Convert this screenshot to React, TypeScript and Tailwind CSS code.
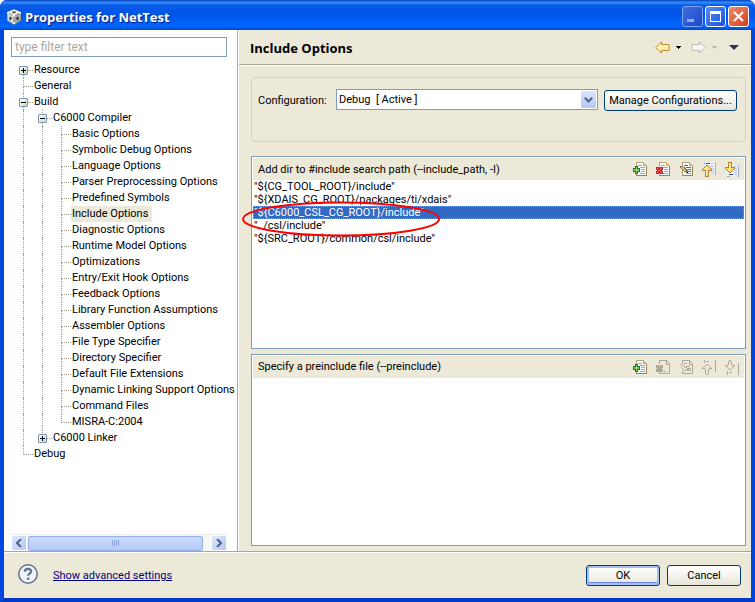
import type { ReactNode } from "react";
import clsx from "clsx";

type TreeNode = {
  label: string;
  open?: boolean;
  selected?: boolean;
  children?: TreeNode[];
};

const tree: TreeNode[] = [
  { label: "Resource", open: false },
  { label: "General" },
  {
    label: "Build",
    open: true,
    children: [
      {
        label: "C6000 Compiler",
        open: true,
        children: [
          { label: "Basic Options" },
          { label: "Symbolic Debug Options" },
          { label: "Language Options" },
          { label: "Parser Preprocessing Options" },
          { label: "Predefined Symbols" },
          { label: "Include Options", selected: true },
          { label: "Diagnostic Options" },
          { label: "Runtime Model Options" },
          { label: "Optimizations" },
          { label: "Entry/Exit Hook Options" },
          { label: "Feedback Options" },
          { label: "Library Function Assumptions" },
          { label: "Assembler Options" },
          { label: "File Type Specifier" },
          { label: "Directory Specifier" },
          { label: "Default File Extensions" },
          { label: "Dynamic Linking Support Options" },
          { label: "Command Files" },
          { label: "MISRA-C:2004" },
        ],
      },
      { label: "C6000 Linker", open: false },
    ],
  },
  { label: "Debug" },
];

const includeDirs = [
  '"${CG_TOOL_ROOT}/include"',
  '"${XDAIS_CG_ROOT}/packages/ti/xdais"',
  '"${C6000_CSL_CG_ROOT}/include"',
  '"../csl/include"',
  '"${SRC_ROOT}/common/csl/include"',
];

const Expander = ({ open, label }: { open: boolean; label: string }) => (
  <button
    aria-label={(open ? "Collapse " : "Expand ") + label}
    className="absolute left-[5px] top-1 size-[9px] rounded-[1px] border border-[#7898b5] bg-linear-to-br from-white to-[#d4cfc0]"
  >
    <svg width="7" height="7" viewBox="0 0 7 7" shapeRendering="crispEdges" className="block">
      <path d={open ? "M1 3h5v1H1z" : "M1 3h5v1H1zM3 1h1v5H3z"} fill="#000" />
    </svg>
  </button>
);

const TreeRows = ({ nodes, trail = [] }: { nodes: TreeNode[]; trail?: boolean[] }) => (
  <>
    {nodes.map((node, i) => {
      const last = i === nodes.length - 1;
      const first = i === 0 && trail.length === 0;
      return (
        <li key={node.label}>
          <div className="flex h-4 items-center whitespace-nowrap">
            {trail.map((goesOn, level) => (
              <span key={level} className="flex h-4 w-[19px] shrink-0 pl-[9px]">
                {goesOn && <span className="border-l border-dotted border-[#a09d8c]" />}
              </span>
            ))}
            <span className="relative flex h-4 w-[19px] shrink-0 flex-col pl-[9px]">
              <span
                className={clsx(
                  "h-[9px] border-b border-dotted border-[#a09d8c]",
                  !first && "border-l"
                )}
              />
              {!last && <span className="h-[7px] border-l border-dotted border-[#a09d8c]" />}
              {node.open !== undefined && <Expander open={node.open} label={node.label} />}
            </span>
            <span className={clsx("h-4 px-px leading-4", node.selected && "bg-[#ece9d8] pr-1")}>
              {node.label}
            </span>
          </div>
          {node.children && node.open && (
            <ul>
              <TreeRows nodes={node.children} trail={[...trail, !last]} />
            </ul>
          )}
        </li>
      );
    })}
  </>
);

const Icon = ({ children }: { children: ReactNode }) => (
  <svg width="16" height="16" viewBox="0 0 16 16" shapeRendering="crispEdges" className="block">
    {children}
  </svg>
);

const Page = () => (
  <>
    <path d="M4 1h8l3 3v11H4z" fill="#f4f8ff" />
    <path d="M4 1h8v1H4zM4 1h1v14H4z" fill="#b5a67e" />
    <path d="M4 14h11v1H4zM14 4h1v11h-1z" fill="#9a8450" />
    <path d="M11 1h1v1h1v1h1v1h1v1h-4z" fill="#d5b15a" />
    <path d="M6 4h4v1H6zM8 6h5v1H8zM9 8h4v1H9zM9 10h4v1H9zM8 12h5v1H8z" fill="#8fabd6" />
  </>
);

const GrayPage = () => (
  <path
    d="M4 1h8v1H4zM4 1h1v4H4zM12 2h1v1h-1zM13 3h1v1h-1zM14 4h1v11h-1zM4 14h11v1H4zM4 12h1v3H4zM11 2h1v3h3v1h-4z"
    fill="#aca899"
  />
);

const AddIcon = () => (
  <Icon>
    <Page />
    <path d="M3 5h3v2h2v4H6v2H3v-2H1V7h2z" fill="#1c7431" />
    <path d="M4 6h1v2h2v2H5v2H4v-2H2V8h2z" fill="#8fce5b" />
  </Icon>
);

const DeleteIcon = ({ disabled }: { disabled?: boolean }) => (
  <Icon>
    {disabled ? <GrayPage /> : <Page />}
    <path
      d="M1 6h3v1h1V6h3v3H7v1h1v3H5v-1H4v1H1v-3h1V9H1z"
      fill={disabled ? "#aca899" : "#cf2634"}
    />
    {disabled ? (
      <path d="M9 12h2v1H9z" fill="#aca899" />
    ) : (
      <path d="M2 7h1v1h1v1h1V8h1V7h1v1H6v1H5v1h1v1h1v1H6v-1H5v-1H4v1H3v1H2v-1h1v-1h1V9H3V8H2z" fill="#ee6068" />
    )}
  </Icon>
);

const EditIcon = ({ disabled }: { disabled?: boolean }) => (
  <Icon>
    {disabled ? (
      <>
        <GrayPage />
        <path d="M6 4h3v1H6zM2 5h1v1H2zM4 6h2v1H4zM6 7h1v1H6zM8 7h4v1H8zM7 8h2v1H7zM3 8h1v1H3zM4 9h1v1H4zM5 10h1v1H5zM9 9h4v1H9zM6 11h2v1H6zM9 11h4v1H9zM8 10h3v1H8z" fill="#aca899" />
      </>
    ) : (
      <>
        <Page />
        <path d="M6 4h4v1H6zM8 6h5v1H8zM10 8h3v1h-3zM10 10h3v1h-3z" fill="#4a6aa5" />
        <path d="M2 5h3v1h2v1h1v1h1v1h1v3H8v-1H6v-1H5V9H4V8H3V7H2z" fill="#8f7040" />
        <path d="M3 6h2v1h1v1h1v1h1v1H6V9H5V8H4V7H3z" fill="#e8c98e" />
        <path d="M9 11h1v1H9z" fill="#222" />
      </>
    )}
  </Icon>
);

const UpIcon = ({ disabled }: { disabled?: boolean }) => (
  <Icon>
    {disabled ? (
      <>
        <path d="M14 1h1v12h-1zM3 1h1v3H3zM5 2h3v1H5z" fill="#aca899" />
        <path d="M5 5h2v1H5zM4 6h1v1H4zM7 6h1v1H7zM3 7h1v1H3zM8 7h1v1H8zM2 8h1v1H2zM9 8h1v1H9zM1 9h3v1H1zM8 9h3v1H8zM4 10h1v5H4zM7 10h1v5H7zM5 15h2v1H5z" fill="#aca899" />
      </>
    ) : (
      <>
        <path d="M3 1h11v12H3z" fill="#edf2fb" />
        <path d="M14 1h1v13h-1z" fill="#9db0cf" />
        <path d="M3 1h1v3H3z" fill="#a9bad6" />
        <path d="M5 2h4v1H5z" fill="#2f4d86" />
        <path d="M10 2h3v1h-3zM9 5h4v1H9zM10 7h3v1h-3zM10 9h3v1h-3zM9 11h4v1H9z" fill="#b9c9e4" />
        <path d="M5 4h2v1h1v1h1v1h1v1h1v2H8v6H4v-6H1V8h1V7h1V6h1V5h1z" fill="#b7812a" />
        <path d="M5 5h2v1h1v1h1v1h1v1H7v6H5V9H2V8h1V7h1V6h1z" fill="#ffdc70" />
        <path d="M5 6h1v8H5z" fill="#fff3bd" />
      </>
    )}
  </Icon>
);

const DownIcon = ({ disabled }: { disabled?: boolean }) => (
  <Icon>
    {disabled ? (
      <>
        <path d="M14 4h1v12h-1zM3 12h1v4H3zM5 13h3v1H5z" fill="#aca899" />
        <path d="M5 1h2v1H5zM4 2h1v4H4zM7 2h1v4H7zM1 6h3v1H1zM8 6h3v1H8zM2 7h1v1H2zM9 7h1v1H9zM3 8h1v1H3zM8 8h1v1H8zM4 9h1v1H4zM7 9h1v1H7zM5 10h2v1H5z" fill="#aca899" />
      </>
    ) : (
      <>
        <path d="M3 4h11v11H3z" fill="#edf2fb" />
        <path d="M14 4h1v12h-1zM3 15h3v1H3z" fill="#9db0cf" />
        <path d="M5 13h4v1H5z" fill="#2f4d86" />
        <path d="M10 5h3v1h-3zM10 7h3v1h-3zM10 9h3v1h-3zM10 11h3v1h-3zM10 13h3v1h-3z" fill="#b9c9e4" />
        <path d="M4 1h4v5h3v2h-1v1H9v1H8v1H7v1H5v-1H4v-1H3V9H2V8H1V6h3z" fill="#b7812a" />
        <path d="M5 2h2v5h3v1H9v1H8v1H7v1H5v-1H4V9H3V8H2V7h3z" fill="#ffdc70" />
        <path d="M5 2h1v8H5z" fill="#fff3bd" />
      </>
    )}
  </Icon>
);

const CubeIcon = () => (
  <svg width="16" height="16" viewBox="0 0 16 16" aria-hidden="true">
    <path d="M8 0l7 3v8.500L8 16l-7-4.500V3z" fill="#8a8a8a" />
    <path d="M8 .5L14.500 3 8 6.500 1.500 3z" fill="#f2f2f2" />
    <path d="M1.500 4L7.500 7v8l-6-3.800z" fill="#d8d8d8" />
    <path d="M14.500 4l-6 3v8l6-3.800z" fill="#a8a8a8" />
    <ellipse cx="8" cy="3.300" rx="2" ry="1" fill="#555" />
    <ellipse cx="4.500" cy="9.300" rx="1.100" ry="1.900" fill="#3d3d3d" />
    <ellipse cx="11.500" cy="9.300" rx="1.100" ry="1.900" fill="#333" />
    <path d="M1 3h2v1.500H1zM13 3h2v1.500h-2zM7 6h2v1.500H7zM7 13.500h2V15H7z" fill="#fff" />
  </svg>
);

const TitleButton = ({ label, tone, children }: { label: string; tone: string; children: ReactNode }) => (
  <button aria-label={label} className={clsx("size-[21px] rounded-[3px] border", tone)}>
    <svg width="19" height="19" viewBox="0 0 19 19" className="block">
      {children}
    </svg>
  </button>
);

const NavArrow = ({ label, flip, fill, stroke }: { label: string; flip?: boolean; fill: string; stroke: string }) => (
  <button aria-label={label}>
    <svg width="15" height="13" viewBox="0 0 15 13" className={clsx("block", flip && "-scale-x-100")}>
      <path d="M6.500.8v2.700h7.500v6H6.500v2.700L.8 6.500z" fill={fill} stroke={stroke} strokeLinejoin="round" />
    </svg>
  </button>
);

const Caret = ({ label, fill }: { label: string; fill: string }) => (
  <button aria-label={label}>
    <svg width="5" height="3" viewBox="0 0 5 3" shapeRendering="crispEdges" className="block">
      <path d="M0 0h5v1H0zM1 1h3v1H1zM2 2h1v1H2z" fill={fill} />
    </svg>
  </button>
);

const PushButton = ({ children, primary, className }: { children: ReactNode; primary?: boolean; className?: string }) => (
  <button
    className={clsx(
      "h-[21px] rounded-[3px] border border-[#003c74] bg-linear-to-b from-white via-[#f5f4ee] to-[#e6e3d8] leading-[19px] whitespace-nowrap",
      primary && "shadow-[inset_0_0_0_2px_#a6c0ee,inset_0_-2px_0_1px_#6982ee]",
      className
    )}
  >
    {children}
  </button>
);

const Panel = ({ title, disabled, children }: { title: string; disabled?: boolean; children?: ReactNode }) => (
  <section className="flex min-h-0 flex-1 flex-col border border-[#7f9db9] bg-white p-px">
    <header className="flex h-[22px] shrink-0 items-center justify-between bg-[#ece9d8] pr-1 pl-[5px]">
      <h2>{title}</h2>
      <div className="flex gap-[7px]">
        <button aria-label="Add"><AddIcon /></button>
        <button aria-label="Delete" disabled={disabled}><DeleteIcon disabled={disabled} /></button>
        <button aria-label="Edit" disabled={disabled}><EditIcon disabled={disabled} /></button>
        <button aria-label="Move up" disabled={disabled}><UpIcon disabled={disabled} /></button>
        <button aria-label="Move down" disabled={disabled}><DownIcon disabled={disabled} /></button>
      </div>
    </header>
    {children}
  </section>
);

const ScrollButton = ({ label, d }: { label: string; d: string }) => (
  <button
    aria-label={label}
    className="flex size-4 items-center justify-center rounded-[2px] border border-white bg-linear-to-br from-[#dfe9ff] to-[#b3c8f7]"
  >
    <svg width="8" height="8" viewBox="0 0 8 8">
      <path d={d} fill="none" stroke="#4d6185" strokeWidth="2" />
    </svg>
  </button>
);

const TitleBar = () => (
  <header className="flex h-[30px] shrink-0 items-center justify-between bg-[linear-gradient(to_bottom,#0840b8_0%,#2f8cff_8%,#0a5be8_18%,#0055e5_45%,#0062fa_75%,#0066ff_88%,#0046c8_100%)] pt-[3px] pr-[6px] pl-[6px]">
    <div className="flex items-center gap-[3px]">
      <CubeIcon />
      <h1 className="font-['Open_Sans',sans-serif] text-[13px] leading-4 font-bold text-white [text-shadow:1px_1px_1px_#0a1883]">
        Properties for NetTest
      </h1>
    </div>
    <div className="flex gap-[2px]">
      <TitleButton label="Minimize" tone="border-[#7f9fe8] bg-linear-to-br from-[#3f6fe0] to-[#1c48c8]">
        <path d="M4 12h7v3H4z" fill="#8fa9ec" />
      </TitleButton>
      <TitleButton label="Maximize" tone="border-white bg-linear-to-br from-[#5a8cf8] to-[#1a4fdc]">
        <path d="M4 4h11v11H4zM5 7v7h9V7z" fill="#fff" fillRule="evenodd" />
      </TitleButton>
      <TitleButton label="Close" tone="border-white bg-linear-to-br from-[#ee8a6c] to-[#d03c12]">
        <path d="M5 5l9 9M14 5l-9 9" stroke="#fff" strokeWidth="2.200" />
      </TitleButton>
    </div>
  </header>
);

const Sidebar = () => (
  <aside className="flex w-[234px] shrink-0 flex-col border-r border-[#aca899] bg-white pt-[7px] pr-[10px] pl-[7px]">
    <input
      aria-label="Filter"
      placeholder="type filter text"
      className="h-5 w-full shrink-0 border border-[#7f9db9] bg-white px-[3px] text-[12px] placeholder:text-[#aca899]"
    />
    <nav className="-mr-2 min-h-0 flex-1 overflow-hidden pt-[5px] pl-[3px]">
      <ul>
        <TreeRows nodes={tree} />
      </ul>
    </nav>
    <div className="flex h-[17px] shrink-0 items-center justify-between border-t border-[#eeede5] bg-[#f7f7f3]">
      <ScrollButton label="Scroll left" d="M6 0L2 4l4 4" />
      <div className="mr-2 ml-px flex h-[15px] flex-1 items-center justify-center gap-px rounded-[2px] border border-[#98b0e8] bg-linear-to-b from-[#cbdafe] to-[#b8cbf8]">
        <span className="h-[6px] w-px bg-[#8ca6e4]" />
        <span className="h-[6px] w-px bg-[#8ca6e4]" />
        <span className="h-[6px] w-px bg-[#8ca6e4]" />
        <span className="h-[6px] w-px bg-[#8ca6e4]" />
      </div>
      <ScrollButton label="Scroll right" d="M2 0l4 4-4 4" />
    </div>
  </aside>
);

export default function App() {
  return (
    <div className="flex h-screen flex-col overflow-hidden rounded-t-[7px] bg-[#0046e0] font-['Roboto','Liberation_Sans',sans-serif] text-[11px] leading-[13px] text-black">
      <TitleBar />
      <div className="flex min-h-0 flex-1 flex-col border-x-4 border-b-4 border-x-[#0046e0] border-b-[#0038c8] bg-[#ece9d8]">
        <div className="flex min-h-0 flex-1 border-b border-[#aca899]">
          <Sidebar />
          <main className="flex min-w-0 flex-1 flex-col border-l border-white">
            <header className="flex h-[35px] shrink-0 items-center justify-between border-b border-[#aca899] pt-px pr-[11px] pl-[11px]">
              <h2 className="font-['Open_Sans',sans-serif] text-[13px] leading-4 font-bold">Include Options</h2>
              <div className="flex items-center">
                <NavArrow label="Back" fill="#fff1b8" stroke="#c08a2a" />
                <span className="w-[6px]" />
                <Caret label="Back history" fill="#000" />
                <span className="w-[10px]" />
                <NavArrow label="Forward" flip fill="#f4f4f2" stroke="#bdbab0" />
                <span className="w-[6px]" />
                <Caret label="Forward history" fill="#bdb9a8" />
                <span className="w-3" />
                <button aria-label="Menu">
                  <svg width="10" height="5" viewBox="0 0 10 5" className="block">
                    <path d="M0 0h10L5 5z" fill="#33305c" />
                  </svg>
                </button>
                <span className="w-px" />
              </div>
            </header>
            <div className="flex min-h-0 flex-1 flex-col border-t border-white pt-[11px] pr-[5px] pb-[5px] pl-3">
              <div className="mb-[14px] flex h-[65px] shrink-0 items-start rounded-[4px] border border-[#d0d0bf] pt-[11px] pr-2 pl-[6px]">
                <label htmlFor="configuration" className="w-[78px] shrink-0 pt-[5px]">
                  Configuration:
                </label>
                <div className="relative min-w-0 flex-1">
                  <select
                    id="configuration"
                    className="block h-[21px] w-full appearance-none border border-[#7f9db9] bg-white pr-5 pl-[2px]"
                  >
                    <option>Debug&nbsp; [ Active ]</option>
                  </select>
                  <span className="pointer-events-none absolute top-[2px] right-[2px] flex h-[17px] w-[15px] items-center justify-center rounded-[1px] bg-linear-to-b from-[#d9e5ff] to-[#b3c8f7]">
                    <svg width="9" height="6" viewBox="0 0 9 6">
                      <path d="M.8.8l3.700 3.700L8.200.8" fill="none" stroke="#4d6185" strokeWidth="2" />
                    </svg>
                  </span>
                </div>
                <PushButton className="mt-px ml-[6px] w-[133px] shrink-0">Manage Configurations...</PushButton>
              </div>
              <div className="flex min-h-0 flex-1 flex-col gap-[5px]">
                <Panel title="Add dir to #include search path (--include_path, -I)">
                  <div className="relative">
                    <ul role="listbox" aria-label="Include paths">
                      {includeDirs.map((dir, i) => (
                        <li
                          key={dir}
                          role="option"
                          aria-selected={i === 2}
                          className={clsx(
                            "pl-px",
                            i === 2 && "bg-[#316ac5] text-white outline-1 -outline-offset-1 outline-dotted outline-[#ce953a]"
                          )}
                        >
                          {dir}
                        </li>
                      ))}
                    </ul>
                    {/* callout round the CSL paths */}
                    <svg
                      width="200"
                      height="38"
                      viewBox="0 0 200 38"
                      className="pointer-events-none absolute top-5 -left-3"
                    >
                      <ellipse cx="100" cy="19" rx="98" ry="16.500" fill="none" stroke="#f00" strokeWidth="2" />
                    </svg>
                  </div>
                </Panel>
                <Panel title="Specify a preinclude file (--preinclude)" disabled />
              </div>
            </div>
          </main>
        </div>
        <footer className="flex h-[46px] shrink-0 items-center border-t border-white pr-[10px] pl-[14px]">
          <button aria-label="Help" className="pb-[3px]">
            <svg width="20" height="20" viewBox="0 0 20 20" className="block">
              <circle cx="10" cy="10" r="9.200" fill="#f0f3f8" stroke="#5f7492" strokeWidth="1.500" />
              <path d="M6.800 7.800C6.800 3.900 13.400 4 13.200 7.500c-.1 2-3 2-3 4.300" fill="none" stroke="#5f7492" strokeWidth="2.200" />
              <path d="M9 13.500h2.400v2.300H9z" fill="#5f7492" />
            </svg>
          </button>
          <a href="#advanced" className="ml-[15px] text-[#000080] underline">
            Show advanced settings
          </a>
          <div className="ml-auto flex gap-[7px]">
            <PushButton primary className="w-[74px]">OK</PushButton>
            <PushButton className="w-[74px]">Cancel</PushButton>
          </div>
        </footer>
      </div>
    </div>
  );
}
